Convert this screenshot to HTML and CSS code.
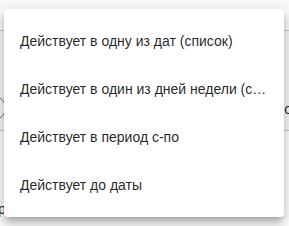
FILE: index.html
```html
<!DOCTYPE html>
<html>
<head>
<meta charset="UTF-8">
<title>Тип действия</title>
<link rel="stylesheet" href="styles.css">
</head>
<body>
<div class="page">
	<div class="head"></div>
	<div class="row">
		<span class="round"></span>
		<span class="grow"></span>
		<span class="tail">о</span>
	</div>
	<div class="row2"></div>
	<div class="foot">р,</div>
</div>
<ul class="menu">
	<li class="item">Действует в одну из дат (список)</li>
	<li class="item">Действует в один из дней недели (список)</li>
	<li class="item">Действует в период с-по</li>
	<li class="item">Действует до даты</li>
</ul>
</body>
</html>
```

FILE: styles.css
```css
body {
	margin: 0;
	background: #fff;
	font-family: "Liberation Sans", Arial, sans-serif;
	color: rgba(0, 0, 0, 0.87);
}
.page {
	width: 289px;
	height: 226px;
	overflow: hidden;
}
.head {
	height: 30px;
	border-bottom: 1px solid #c8c8c8;
	background: #fafafa;
}
.row {
	display: flex;
	align-items: center;
	height: 99px;
	border-bottom: 1px solid #c8c8c8;
	background: #f7f7f7;
	font-size: 14px;
}
.round {
	width: 24px;
	height: 24px;
	margin-left: -20px;
	margin-top: 54px;
	border: 1px solid #777;
	border-radius: 50%;
}
.grow {
	flex: 1;
}
.tail {
	margin-right: -3px;
	margin-top: 56px;
}
.row2 {
	height: 70px;
	background: #fff;
}
.foot {
	font-size: 14px;
	margin-left: -2px;
}
.menu {
	position: absolute;
	left: 4px;
	top: 9px;
	width: 280px;
	margin: 0;
	padding: 8px 0;
	list-style: none;
	background: #fff;
	border-radius: 4px;
	box-shadow: 0px 5px 5px -3px rgba(0,0,0,0.2), 0px 8px 10px 1px rgba(0,0,0,0.14), 0px 3px 14px 2px rgba(0,0,0,0.12);
}
.item {
	height: 48px;
	line-height: 48px;
	padding: 0 16px;
	font-size: 14px;
	white-space: nowrap;
	overflow: hidden;
	text-overflow: ellipsis;
}
```
